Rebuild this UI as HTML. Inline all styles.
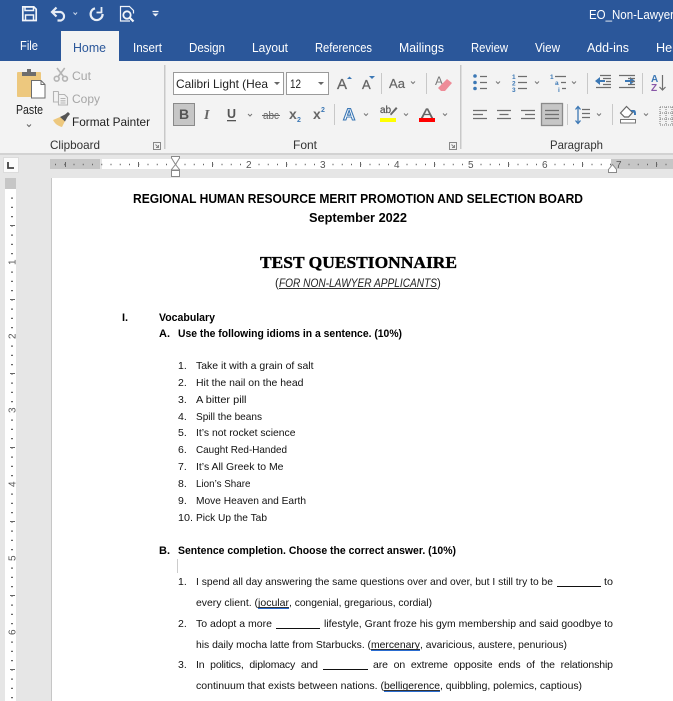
<!DOCTYPE html>
<html><head><meta charset="utf-8"><title>Word</title>
<style>
html,body{margin:0;padding:0;width:673px;height:701px;overflow:hidden;background:#fff}
svg{display:block}
text{font-family:"Liberation Sans",sans-serif;white-space:pre}
.t{font-size:12.5px;fill:#fff}
.r{font-size:12px;fill:#333}
.d{font-size:10.5px;fill:#111}
.b{font-size:11px;font-weight:bold;fill:#000}
.n{font-size:10.5px;fill:#111}
.rn{font-size:10px;fill:#555}
</style></head><body>
<svg width="673" height="701" viewBox="0 0 673 701" xmlns="http://www.w3.org/2000/svg">
<rect width="673" height="61" fill="#2b579a"/>
<rect y="61" width="673" height="92" fill="#f3f3f3"/>
<rect x="61" y="31" width="58" height="30" fill="#f3f3f3"/>
<rect y="153" width="673" height="2" fill="#d2d2d2"/>
<rect y="155" width="673" height="546" fill="#e6e6e6"/>

<!-- QAT -->
<g fill="none" stroke="#f2f5fa">
<path d="M22.800 6.800h11l2.400 2.400v11.300h-13.400z" stroke-width="1.700"/>
<path d="M25 7h8.500v3.500h-8.500zM25.500 20.500v-5.500h8v5.500" stroke-width="1.500"/>
<path d="M56.500 7.500l-4.500 4.500 4.500 4.500M52.500 12h8a4.400 4.400 0 0 1 .5 8.500h-3.500" stroke-width="2.200" stroke="#e6ecf5"/>
<path d="M73.500 12.500l1.800 2 1.800-2" stroke-width="1" stroke="#c9d6ea"/>
<path d="M95 8.300A6 6 0 1 0 102.600 14" stroke-width="2.200" stroke="#e8eef6"/>
<path d="M101.500 7v5.500h-5" stroke-width="1.800" stroke="#e8eef6"/>
<path d="M130 6.500h-9.500v14.500h9.500M129.500 6.500l4 4v3" stroke-width="1.200"/>
<circle cx="127" cy="15" r="3.700" stroke-width="1.800"/>
<path d="M130 18l3.500 3.500" stroke-width="2.200"/>
<path d="M152.500 11.500h6" stroke-width="1.300"/>
</g>
<path d="M152.500 13.500h6l-3 3z" fill="#f2f5fa"/>
<text class="t" x="589" y="19" textLength="85" lengthAdjust="spacingAndGlyphs">EO_Non-Lawyer</text>

<!-- tabs -->
<text class="t" x="20" y="50" textLength="18" lengthAdjust="spacingAndGlyphs">File</text>
<text class="t" x="73" y="52" style="fill:#2b579a" textLength="33" lengthAdjust="spacingAndGlyphs">Home</text>
<text class="t" x="133" y="52" textLength="29" lengthAdjust="spacingAndGlyphs">Insert</text>
<text class="t" x="189" y="52" textLength="36" lengthAdjust="spacingAndGlyphs">Design</text>
<text class="t" x="252" y="52" textLength="36" lengthAdjust="spacingAndGlyphs">Layout</text>
<text class="t" x="315" y="52" textLength="57" lengthAdjust="spacingAndGlyphs">References</text>
<text class="t" x="399" y="52" textLength="45" lengthAdjust="spacingAndGlyphs">Mailings</text>
<text class="t" x="471" y="52" textLength="37" lengthAdjust="spacingAndGlyphs">Review</text>
<text class="t" x="535" y="52" textLength="25" lengthAdjust="spacingAndGlyphs">View</text>
<text class="t" x="587" y="52" textLength="42" lengthAdjust="spacingAndGlyphs">Add-ins</text>
<text class="t" x="656" y="52" textLength="26" lengthAdjust="spacingAndGlyphs">Help</text>

<!-- separators -->
<g fill="#c8c8c8">
<rect x="164" y="65" width="1.500" height="84"/><rect x="460" y="65" width="1.500" height="84"/>
<rect x="381" y="73" width="1" height="21"/><rect x="426" y="73" width="1" height="21"/>
<rect x="587" y="73" width="1" height="21"/><rect x="642" y="73" width="1" height="21"/>
<rect x="334" y="104" width="1" height="21"/><rect x="567" y="104" width="1" height="21"/><rect x="612" y="104" width="1" height="21"/>
</g>

<!-- Clipboard -->
<rect x="17" y="72" width="24" height="25" rx="1" fill="#edc87e"/>
<path d="M22 76v-4h5v-3h4v3h5v4z" fill="#6d6d6d"/>
<path d="M31.500 80.500h9.500l4 4v13.500h-13.500z" fill="#fff" stroke="#6d6d6d"/>
<path d="M41 80.500v4h4" fill="none" stroke="#6d6d6d"/>
<text class="r" x="16" y="114" style="font-size:12.500px;fill:#222" textLength="27" lengthAdjust="spacingAndGlyphs">Paste</text>
<path d="M27 124.500l2 2 2-2" fill="none" stroke="#666"/>
<g fill="none" stroke="#b4b4b4" stroke-width="1.600">
<circle cx="56.700" cy="78.700" r="2.400"/><circle cx="65" cy="78.700" r="2.400"/><path d="M58.200 76.500l6.500-8.500M63.500 76.500l-6.500-8.500"/>
</g>
<g fill="none" stroke="#b4b4b4" stroke-width="1.100">
<path d="M58.500 91.500h-5v10.500h5M58.500 91.500v3"/>
<path d="M58.500 94.500h6l3 3v7.500h-9z"/>
<path d="M60.500 98.500h5M60.500 100.800h5M60.500 103h5"/>
</g>
<text class="r" x="72" y="80" style="fill:#a6a6a6" textLength="19" lengthAdjust="spacingAndGlyphs">Cut</text>
<text class="r" x="72" y="103" style="fill:#a6a6a6" textLength="28" lengthAdjust="spacingAndGlyphs">Copy</text>
<path d="M53 120l7-3 5 4-3 6c-4-1-7-3-9-7z" fill="#edc87e"/>
<path d="M60 117l5-2.500 3-2.500 2 2-2.500 3-2.500 4.500z" fill="#555"/>
<text class="r" x="72" y="126" style="fill:#222" textLength="78" lengthAdjust="spacingAndGlyphs">Format Painter</text>
<text class="r" x="50" y="149" style="fill:#333" textLength="50" lengthAdjust="spacingAndGlyphs">Clipboard</text>
<text class="r" x="293" y="149" textLength="24" lengthAdjust="spacingAndGlyphs">Font</text>
<text class="r" x="550" y="149" textLength="53" lengthAdjust="spacingAndGlyphs">Paragraph</text>
<g fill="none" stroke="#888"><path d="M153.500 142.500h7v7h-7zM155.500 144.500l3 3M158.500 145v2.500h-2.500"/><path d="M449.500 142.500h7v7h-7zM451.500 144.500l3 3M454.500 145v2.500h-2.500"/></g>

<!-- Font -->
<rect x="173.500" y="72.500" width="110" height="22" fill="#fff" stroke="#9a9a9a"/>
<rect x="286.500" y="72.500" width="42" height="22" fill="#fff" stroke="#9a9a9a"/>
<text class="r" x="176" y="88" style="fill:#222" textLength="92" lengthAdjust="spacingAndGlyphs">Calibri Light (Hea</text>
<text class="r" x="290" y="88" style="fill:#222" textLength="11" lengthAdjust="spacingAndGlyphs">12</text>
<path d="M274 82h6l-3 3zM318 82h6l-3 3z" fill="#666"/>
<rect x="173.500" y="103.500" width="21" height="22" fill="#c6c6c6" stroke="#8a8a8a"/>
<text x="179" y="119" style="font-size:14px;font-weight:bold;fill:#555">B</text>
<text x="204" y="119" style="font-size:14px;font-weight:bold;font-style:italic;fill:#666;font-family:'Liberation Serif',serif">I</text>
<text x="227" y="118" style="font-size:13px;font-weight:bold;fill:#555" textLength="9" lengthAdjust="spacingAndGlyphs">U</text>
<rect x="227" y="120" width="9" height="1.300" fill="#555"/>
<path d="M248 114l2 2 2-2" fill="none" stroke="#777"/>
<text x="263" y="119" style="font-size:11px;fill:#666" textLength="16" lengthAdjust="spacingAndGlyphs">abc</text>
<rect x="262" y="115" width="18" height="1" fill="#666"/>
<text x="289" y="119" style="font-size:14px;font-weight:bold;fill:#666">x</text><text x="297" y="122" style="font-size:7px;font-weight:bold;fill:#3c78b5">2</text>
<text x="313" y="119" style="font-size:14px;font-weight:bold;fill:#666">x</text><text x="321" y="112" style="font-size:7px;font-weight:bold;fill:#3c78b5">2</text>
<text x="337" y="89" style="font-size:15px;fill:#666;stroke:#666;stroke-width:.3">A</text><path d="M347 79l2.500-2.500 2.500 2.500z" fill="#3c78b5"/>
<text x="362" y="89" style="font-size:13px;fill:#666;stroke:#666;stroke-width:.3">A</text><path d="M369 76h6l-3 3z" fill="#3c78b5"/>
<text x="389" y="88" style="font-size:13px;fill:#666;stroke:#666;stroke-width:.2" textLength="16" lengthAdjust="spacingAndGlyphs">Aa</text>
<text x="435" y="85" style="font-size:12px;fill:#777">A</text>
<path d="M438 88l9-9 5 4-7 8h-4z" fill="#ee8c98"/>
<text x="343" y="120" style="font-size:17px;font-weight:bold;fill:#fff;stroke:#3c78b5;stroke-width:1.100">A</text>
<text x="380" y="113" style="font-size:10px;fill:#555;stroke:#555;stroke-width:.2">ab</text><path d="M390 114l6-7 1.500 1.500-6.500 7z" fill="#666"/>
<rect x="380" y="118" width="16" height="4" fill="#ff0"/>
<text x="421" y="118" style="font-size:14px;fill:#666;stroke:#666;stroke-width:.3" textLength="12" lengthAdjust="spacingAndGlyphs">A</text>
<rect x="419" y="118" width="16" height="4" fill="#f00"/>
<g fill="none" stroke="#777"><path d="M411 81.500l2 2 2-2M496 81.500l2 2 2-2M535 81.500l2 2 2-2M572 81.500l2 2 2-2M364 113.500l2 2 2-2M404 113.500l2 2 2-2M443 113.500l2 2 2-2M597 113.500l2 2 2-2M644 113.500l2 2 2-2"/></g>

<!-- Paragraph row 1 -->
<g fill="#3c78b5">
<circle cx="475" cy="76" r="1.800"/><circle cx="475" cy="82.500" r="1.800"/><circle cx="475" cy="88.500" r="1.800"/>
<path d="M595 81l5-4v3h5v2h-5v3zM635 81l-5-4v3h-5v2h5v3z"/>
</g>
<g font-size="6.500" fill="#3c78b5" font-weight="bold">
<text x="512" y="79">1</text><text x="512" y="85.500">2</text><text x="512" y="92">3</text>
<text x="550" y="79">1</text><text x="555" y="85">a</text><text x="558" y="92">i</text>
</g>
<g fill="none" stroke="#6e6e6e" stroke-width="1.200">
<path d="M480 76.500h7M480 82.500h7M480 88.500h7"/>
<path d="M518 76.500h9M518 82.500h9M518 88.500h9"/>
<path d="M555 76.500h11M561 82.500h5M562 88.500h4"/>
<path d="M600 75.500h11M603 78.500h8M606 81.500h5M603 84.500h8M596 87.500h15"/>
<path d="M619 75.500h16M628 78.500h7M631 81.500h4M628 84.500h7M619 87.500h16"/>
<path d="M662.500 75v15M659.500 87l3 3 3-3"/>
</g>
<text x="651" y="82" style="font-size:10px;font-weight:bold;fill:#3c78b5">A</text>
<text x="651" y="91" style="font-size:10px;font-weight:bold;fill:#8856a7">Z</text>

<!-- Paragraph row 2 -->
<rect x="541.500" y="103.500" width="21" height="22" fill="#c6c6c6" stroke="#8a8a8a" stroke-width="1.300"/>
<g fill="none" stroke="#6e6e6e" stroke-width="1.200">
<path d="M473 110.500h14M473 114.500h10M473 118.500h14"/>
<path d="M497 110.500h14M499.500 114.500h9M497 118.500h14"/>
<path d="M521 110.500h14M525 114.500h10M521 118.500h14"/>
<path d="M545 110.500h14M545 114.500h14M545 118.500h14"/>
<path d="M582 109.500h8M582 113.500h8M582 117.500h8"/>
</g>
<path d="M620.500 119.500h15v3.500h-15z" fill="#fff" stroke="#777"/>
<path d="M620.500 113l6-6.500 6 6-4 4.500h-4z" fill="#fff" stroke="#666" stroke-width="1.200"/>
<path d="M578 107v16M575.500 109.500l2.500-3 2.500 3M575.500 120.500l2.500 3 2.500-3" fill="none" stroke="#3c78b5" stroke-width="1.300"/>
<path d="M630 110h4c2 0 2 3 2 5h-2v-2z" fill="#3c78b5"/>
<path d="M660 107h13M660 113h13M660 119h13M660 125h13M660 107v18M666 107v18M672 107v18" stroke="#777" stroke-dasharray="1 1" fill="none"/>

<!-- Horizontal ruler -->
<rect x="3" y="157" width="16" height="16" fill="#dcdcdc"/>
<rect x="4" y="158" width="14" height="14" fill="#fbfbfb"/>
<path d="M8 162v6h6" fill="none" stroke="#444" stroke-width="1.800"/>
<rect x="50" y="159" width="50" height="10" fill="#c6c6c6"/>
<rect x="102" y="159" width="509" height="10" fill="#fff"/>
<rect x="611" y="159" width="62" height="10" fill="#c6c6c6"/>
<path d="M55 164.500H672" stroke="#666" stroke-width="1.500" stroke-dasharray="1 8.250"/>
<g fill="#666">
<rect x="65" y="162" width="1" height="5"/><rect x="138" y="162" width="1" height="5"/><rect x="212" y="162" width="1" height="5"/><rect x="286" y="162" width="1" height="5"/><rect x="360" y="162" width="1" height="5"/><rect x="434" y="162" width="1" height="5"/><rect x="508" y="162" width="1" height="5"/><rect x="582" y="162" width="1" height="5"/><rect x="656" y="162" width="1" height="5"/>
</g>
<g fill="#fff"><rect x="244" y="160" width="10" height="8"/><rect x="318" y="160" width="10" height="8"/><rect x="392" y="160" width="10" height="8"/><rect x="466" y="160" width="10" height="8"/><rect x="540" y="160" width="10" height="8"/></g>
<rect x="614" y="160" width="10" height="8" fill="#c6c6c6"/>
<g class="rn">
<text class="rn" x="246" y="168">2</text><text class="rn" x="320" y="168">3</text><text class="rn" x="394" y="168">4</text><text class="rn" x="468" y="168">5</text><text class="rn" x="542" y="168">6</text><text class="rn" x="616" y="168">7</text>
</g>
<path d="M171.500 156.500h8v1.500l-4 6.500-4-6.500zM175.500 164.500l4 5v.5h-8v-.5zM171.500 170.500h8v6h-8z" fill="#fff" stroke="#888"/>
<path d="M608.500 172.500v-3l4-5 4 5v3z" fill="#fff" stroke="#888"/>

<!-- Vertical ruler -->
<rect x="5" y="178" width="11" height="523" fill="#fff"/>
<rect x="5" y="178" width="11" height="11" fill="#c6c6c6"/>
<path d="M12 197.500V701" stroke="#666" stroke-width="2" stroke-dasharray="1.200 8.050" fill="none"/>
<g fill="#666">
<rect x="10" y="225" width="5" height="1"/><rect x="10" y="299" width="5" height="1"/><rect x="10" y="373" width="5" height="1"/><rect x="10" y="447" width="5" height="1"/><rect x="10" y="521" width="5" height="1"/><rect x="10" y="595" width="5" height="1"/><rect x="10" y="669" width="5" height="1"/>
</g>
<g fill="#fff"><rect x="7" y="257" width="9" height="10"/><rect x="7" y="331" width="9" height="10"/><rect x="7" y="405" width="9" height="10"/><rect x="7" y="479" width="9" height="10"/><rect x="7" y="553" width="9" height="10"/><rect x="7" y="627" width="9" height="10"/></g>
<text class="rn" transform="translate(15.500,265) rotate(-90)">1</text>
<text class="rn" transform="translate(15.500,339) rotate(-90)">2</text>
<text class="rn" transform="translate(15.500,413) rotate(-90)">3</text>
<text class="rn" transform="translate(15.500,487) rotate(-90)">4</text>
<text class="rn" transform="translate(15.500,561) rotate(-90)">5</text>
<text class="rn" transform="translate(15.500,635) rotate(-90)">6</text>

<!-- Page -->
<rect x="51" y="178" width="1" height="523" fill="#c6c6c6"/>
<rect x="52" y="178" width="621" height="523" fill="#fff"/>

<text x="133" y="203" style="font-size:12.500px;font-weight:bold" textLength="450" lengthAdjust="spacingAndGlyphs">REGIONAL HUMAN RESOURCE MERIT PROMOTION AND SELECTION BOARD</text>
<text x="309" y="222" style="font-size:12.500px;font-weight:bold" textLength="98" lengthAdjust="spacingAndGlyphs">September 2022</text>
<text x="260" y="268" style="font-family:'Liberation Serif',serif;font-size:16.500px;font-weight:bold;stroke:#000;stroke-width:.35" textLength="197" lengthAdjust="spacingAndGlyphs">TEST QUESTIONNAIRE</text>
<text x="275" y="287" style="font-size:11.500px;fill:#222">(</text>
<text x="279" y="287" style="font-size:11.500px;font-style:italic;fill:#222" textLength="158" lengthAdjust="spacingAndGlyphs">FOR NON-LAWYER APPLICANTS</text>
<rect x="279" y="288" width="158" height="1" fill="#333"/>
<text x="437" y="287" style="font-size:11.500px;fill:#222">)</text>

<text class="b" x="122" y="321">I.</text>
<text class="b" x="159" y="321" textLength="56" lengthAdjust="spacingAndGlyphs">Vocabulary</text>
<text class="b" x="159" y="337">A.</text>
<text class="b" x="178" y="337" textLength="224" lengthAdjust="spacingAndGlyphs">Use the following idioms in a sentence. (10%)</text>

<text class="n" x="178" y="369">1.</text><text class="d" x="196" y="369" textLength="117.500" lengthAdjust="spacingAndGlyphs">Take it with a grain of salt</text>
<text class="n" x="178" y="386">2.</text><text class="d" x="196" y="386" textLength="107.500" lengthAdjust="spacingAndGlyphs">Hit the nail on the head</text>
<text class="n" x="178" y="403">3.</text><text class="d" x="196" y="403" textLength="50.500" lengthAdjust="spacingAndGlyphs">A bitter pill</text>
<text class="n" x="178" y="420">4.</text><text class="d" x="196" y="420" textLength="66" lengthAdjust="spacingAndGlyphs">Spill the beans</text>
<text class="n" x="178" y="436">5.</text><text class="d" x="196" y="436" textLength="99.500" lengthAdjust="spacingAndGlyphs">It’s not rocket science</text>
<text class="n" x="178" y="453">6.</text><text class="d" x="196" y="453" textLength="91" lengthAdjust="spacingAndGlyphs">Caught Red-Handed</text>
<text class="n" x="178" y="470">7.</text><text class="d" x="196" y="470" textLength="87.500" lengthAdjust="spacingAndGlyphs">It’s All Greek to Me</text>
<text class="n" x="178" y="487">8.</text><text class="d" x="196" y="487" textLength="54.500" lengthAdjust="spacingAndGlyphs">Lion’s Share</text>
<text class="n" x="178" y="504">9.</text><text class="d" x="196" y="504" textLength="110" lengthAdjust="spacingAndGlyphs">Move Heaven and Earth</text>
<text class="n" x="178" y="521" textLength="15" lengthAdjust="spacingAndGlyphs">10.</text><text class="d" x="196" y="521" textLength="71" lengthAdjust="spacingAndGlyphs">Pick Up the Tab</text>

<text class="b" x="159" y="554">B.</text>
<text class="b" x="178" y="554" textLength="278" lengthAdjust="spacingAndGlyphs">Sentence completion. Choose the correct answer. (10%)</text>
<rect x="177" y="559" width="1" height="14" fill="#ccc"/>

<text class="n" x="178" y="585">1.</text>
<text class="d" x="196" y="585" textLength="357" lengthAdjust="spacingAndGlyphs">I spend all day answering the same questions over and over, but I still try to be</text>
<rect x="557" y="586" width="44" height="1" fill="#111"/>
<text class="d" x="604" y="585" textLength="9" lengthAdjust="spacingAndGlyphs">to</text>

<text class="d" x="196" y="606" textLength="62" lengthAdjust="spacingAndGlyphs">every client. (</text>
<text class="d" x="258" y="606" textLength="31" lengthAdjust="spacingAndGlyphs">jocular</text>
<text class="d" x="289" y="606" textLength="143" lengthAdjust="spacingAndGlyphs">, congenial, gregarious, cordial)</text>
<rect x="258" y="607" width="31" height="1" fill="#333"/><rect x="258" y="608" width="31" height="1" fill="#2a6cd0"/>

<text class="n" x="178" y="627">2.</text>
<text class="d" x="196" y="627" textLength="76" lengthAdjust="spacingAndGlyphs">To adopt a more</text>
<rect x="276" y="628" width="44" height="1" fill="#111"/>
<text class="d" x="324" y="627" textLength="289" lengthAdjust="spacingAndGlyphs">lifestyle, Grant froze his gym membership and said goodbye to</text>

<text class="d" x="196" y="648" textLength="175" lengthAdjust="spacingAndGlyphs">his daily mocha latte from Starbucks. (</text>
<text class="d" x="371" y="648" textLength="49" lengthAdjust="spacingAndGlyphs">mercenary</text>
<text class="d" x="420" y="648" textLength="147" lengthAdjust="spacingAndGlyphs">, avaricious, austere, penurious)</text>
<rect x="371" y="649" width="49" height="1" fill="#333"/><rect x="371" y="650" width="49" height="1" fill="#2a6cd0"/>

<text class="n" x="178" y="668">3.</text>
<text class="d" x="196" y="668" textLength="122" style="word-spacing:3px">In politics, diplomacy and</text>
<rect x="323" y="669" width="45" height="1" fill="#111"/>
<text class="d" x="373" y="668" textLength="240" style="word-spacing:3px">are on extreme opposite ends of the relationship</text>

<text class="d" x="196" y="689" textLength="188" lengthAdjust="spacingAndGlyphs">continuum that exists between nations. (</text>
<text class="d" x="384" y="689" textLength="56" lengthAdjust="spacingAndGlyphs">belligerence</text>
<text class="d" x="440" y="689" textLength="142" lengthAdjust="spacingAndGlyphs">, quibbling, polemics, captious)</text>
<rect x="384" y="690" width="56" height="1" fill="#333"/><rect x="384" y="691" width="56" height="1" fill="#2a6cd0"/>
</svg>
</body></html>
